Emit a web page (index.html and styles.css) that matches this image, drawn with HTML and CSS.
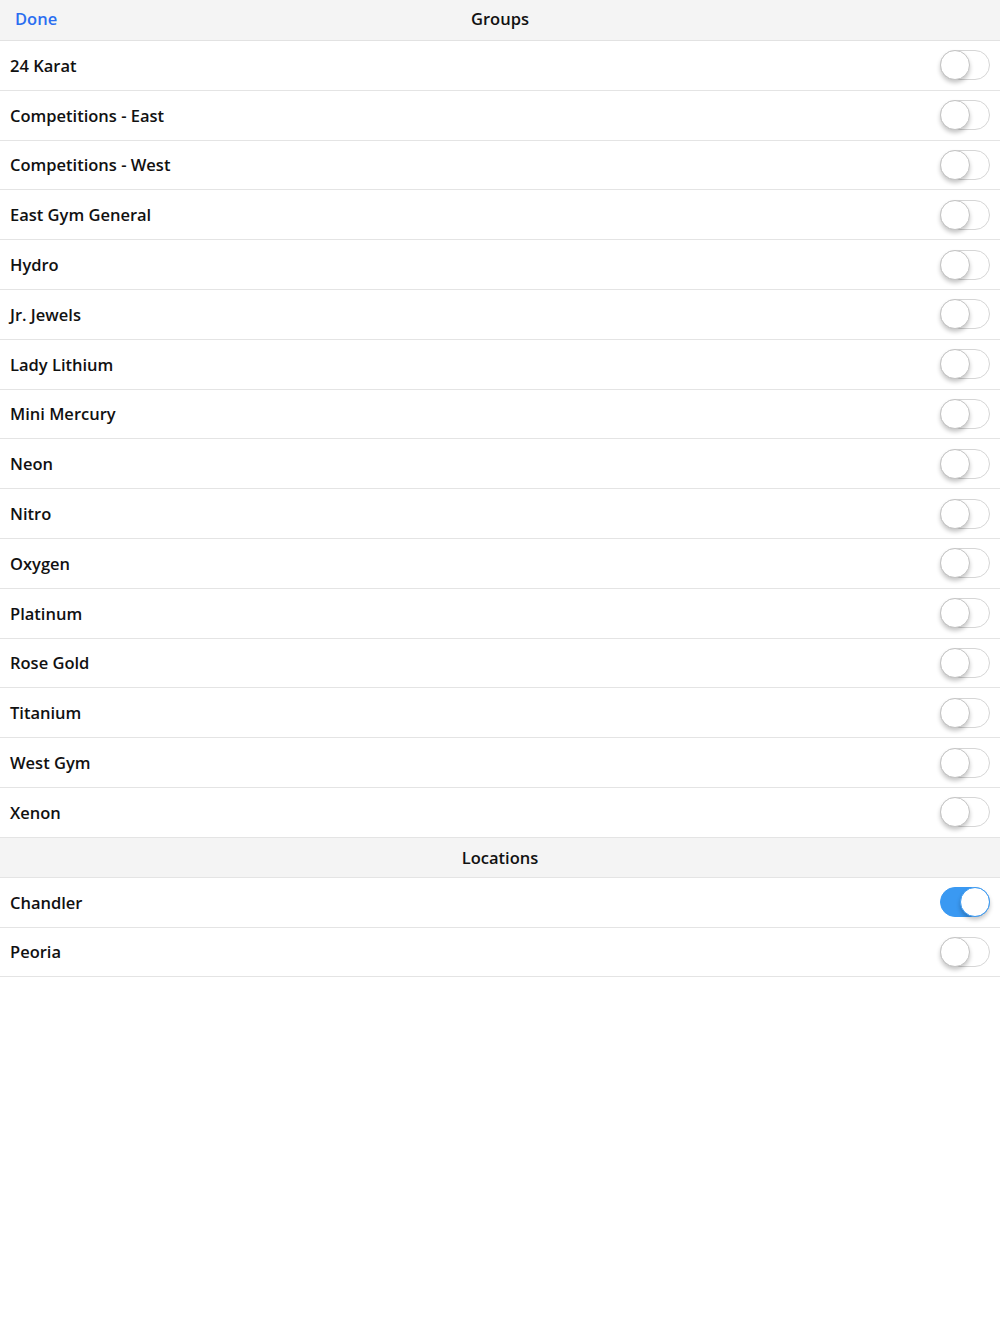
FILE: index.html
```html
<!DOCTYPE html>
<html lang="en">

<head>
    <meta charset="UTF-8">
    <title>Groups</title>
    <link rel="stylesheet" href="styles.css">
</head>

<body>
    <div class="header">
        <a class="done" href="#">Done</a>
        <span class="title">Groups</span>
    </div>

    <ul class="list">
        <li class="row"><span>24 Karat</span><span class="switch"></span></li>
        <li class="row"><span>Competitions - East</span><span class="switch"></span></li>
        <li class="row"><span>Competitions - West</span><span class="switch"></span></li>
        <li class="row"><span>East Gym General</span><span class="switch"></span></li>
        <li class="row"><span>Hydro</span><span class="switch"></span></li>
        <li class="row"><span>Jr. Jewels</span><span class="switch"></span></li>
        <li class="row"><span>Lady Lithium</span><span class="switch"></span></li>
        <li class="row"><span>Mini Mercury</span><span class="switch"></span></li>
        <li class="row"><span>Neon</span><span class="switch"></span></li>
        <li class="row"><span>Nitro</span><span class="switch"></span></li>
        <li class="row"><span>Oxygen</span><span class="switch"></span></li>
        <li class="row"><span>Platinum</span><span class="switch"></span></li>
        <li class="row"><span>Rose Gold</span><span class="switch"></span></li>
        <li class="row"><span>Titanium</span><span class="switch"></span></li>
        <li class="row"><span>West Gym</span><span class="switch"></span></li>
        <li class="row"><span>Xenon</span><span class="switch"></span></li>
    </ul>

    <div class="section">Locations</div>

    <ul class="list">
        <li class="row"><span>Chandler</span><span class="switch on"></span></li>
        <li class="row"><span>Peoria</span><span class="switch"></span></li>
    </ul>
</body>

</html>
```

FILE: styles.css
```css
/* General Styles */
body {
    font-family: 'Open Sans', sans-serif;
    font-weight: 600;
    font-size: 16.5px;
    color: #111;
    background-color: #fff;
    margin: 0;
    padding: 0;
}

.header {
    box-sizing: border-box;
    height: 41px;
    padding-bottom: 3px;
    background-color: #f4f4f4;
    border-bottom: 1px solid #e2e2e2;
    display: flex;
    align-items: center;
    justify-content: center;
    position: relative;
}

.done {
    position: absolute;
    left: 15px;
    top: 7px;
    color: #2a6ef0;
    text-decoration: none;
}

.list {
    list-style: none;
    margin: 0;
    padding: 0;
}

.row {
    height: 48.8px;
    border-bottom: 1px solid #e4e4e4;
    display: flex;
    align-items: center;
    justify-content: space-between;
    padding: 0 10px;
}

.section {
    height: 39px;
    background-color: #f4f4f4;
    border-bottom: 1px solid #e4e4e4;
    display: flex;
    align-items: center;
    justify-content: center;
}

/* Toggle switch */
.switch {
    width: 48px;
    height: 28px;
    border: 1px solid #d6d6d6;
    border-radius: 15px;
    position: relative;
    background-color: #fff;
}

.switch::after {
    content: '';
    position: absolute;
    left: -1px;
    top: -1px;
    width: 28px;
    height: 28px;
    border-radius: 50%;
    background-color: #fff;
    border: 1px solid #c4c4c4;
    box-shadow: 0 3px 4px rgba(0, 0, 0, 0.22);
}

.switch.on {
    background-color: #3a99f2;
    border-color: #3a99f2;
}

.switch.on::after {
    left: 19px;
    border-color: #3a99f2;
}
```
